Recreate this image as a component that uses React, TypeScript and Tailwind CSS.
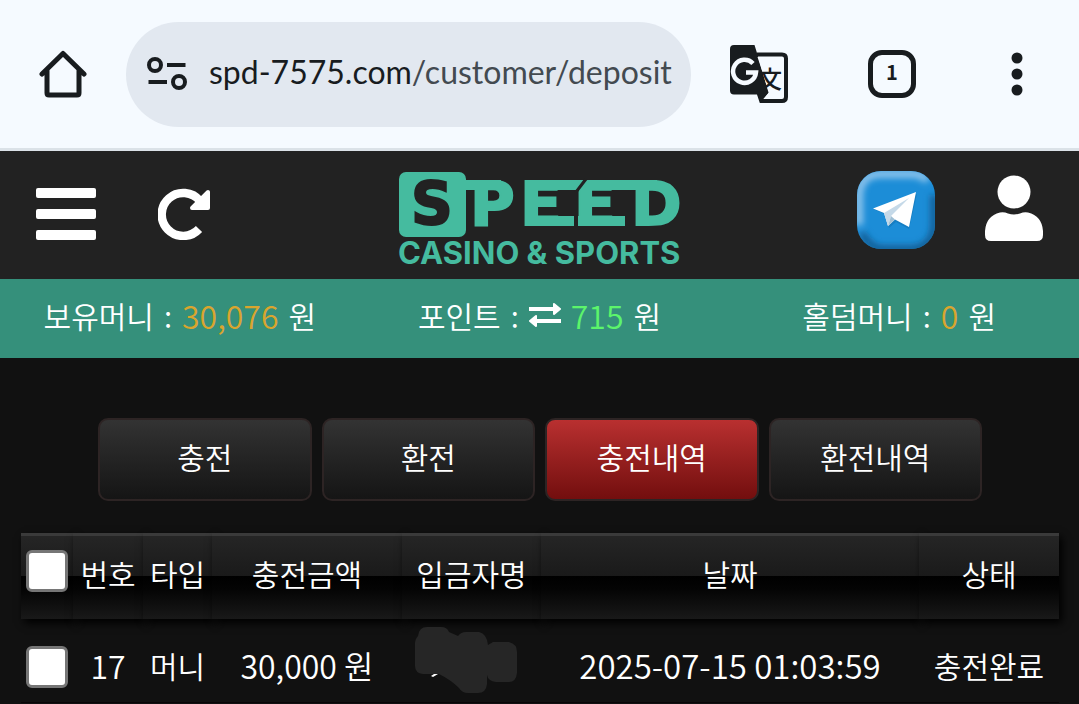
import React from "react";

const tabs = ["충전", "환전", "충전내역", "환전내역"];

const columns = [
  { label: "번호", width: "w-[70px]" },
  { label: "타입", width: "w-[69px]" },
  { label: "충전금액", width: "w-[190px]" },
  { label: "입금자명", width: "w-[139px]" },
  { label: "날짜", width: "" },
  { label: "상태", width: "w-[140px]" },
];

const deposits = [
  {
    id: 17,
    type: "머니",
    amount: "30,000 원",
    date: "2025-07-15 01:03:59",
    status: "충전완료",
  },
];

const thStyle =
  "h-[86px] bg-[linear-gradient(#262626,#1a1a1a_50%,#000_50%,#040404_65%,#191919)] p-0 text-center font-[350] shadow-[3px_4px_8px_#000]";

const HomeIcon = () => (
  <svg viewBox="0 0 48 48" className="h-12 w-12" fill="none" stroke="#181c1f">
    <path
      d="M3 24 24 3.500 45 24M8 20v23q0 2 2 2h28q2 0 2-2V20"
      strokeWidth="5"
      strokeLinejoin="round"
      strokeLinecap="round"
    />
  </svg>
);

const SiteInfoIcon = () => (
  <svg viewBox="0 0 40 34" className="h-[34px] w-10" fill="none" stroke="#181c1f">
    <circle cx="8" cy="8" r="6" strokeWidth="4" />
    <circle cx="32" cy="25" r="6" strokeWidth="4" />
    <path d="M20 8h18.500M1.500 25H20" strokeWidth="4" />
  </svg>
);

const TranslateIcon = () => (
  <svg viewBox="0 0 58 58" className="h-[58px] w-[58px]">
    <path
      d="M27 9.500h25q4 0 4 4v38.500q0 4-4 4H30"
      fill="none"
      stroke="#181c1f"
      strokeWidth="4"
    />
    <path
      d="M4 0h20.500l2.800 9 11.200 38.500L29.800 58 27 49.500H4q-4 0-4-4V4q0-4 4-4Z"
      fill="#181c1f"
    />
    <path d="M27.500 12h8l3 34-9-28Z" fill="#f5faff" />
    <path d="M38.500 47.500 30.500 57l-3-7.500Z" fill="#181c1f" />
    <path
      d="M23 18.500A11.500 11.500 0 1 0 26 27.500H16"
      fill="none"
      stroke="#f5faff"
      strokeWidth="4.500"
    />
    <text
      x="28"
      y="43"
      fontSize="24"
      className="fill-[#181c1f] font-['Noto_Sans_CJK_KR',sans-serif] font-medium">
      文
    </text>
  </svg>
);

const RefreshIcon = () => (
  <svg viewBox="0 0 52 52" className="h-13 w-13">
    <path
      d="M41 41A21.500 21.500 0 1 1 42 13"
      fill="none"
      stroke="#fff"
      strokeWidth="8.500"
    />
    <path
      d="M50 4v16H34Z"
      fill="#fff"
      stroke="#fff"
      strokeWidth="4"
      strokeLinejoin="round"
    />
  </svg>
);

const TelegramIcon = () => (
  <svg viewBox="0 0 78 78" className="h-[78px] w-[78px]">
    <defs>
      <clipPath id="tile">
        <rect width="78" height="78" rx="24" />
      </clipPath>
      <filter id="soft">
        <feGaussianBlur stdDeviation="3" />
      </filter>
    </defs>
    <g clipPath="url(#tile)">
      <rect width="78" height="78" fill="#1c8dd7" />
      <g fill="none" filter="url(#soft)">
        <path d="M2 54V24Q3 3 24 3h30q12 0 16 7" stroke="#8cc3eb" strokeWidth="8" />
        <path d="M5 62q8 16 22 16h28q21-2 22-24V24" stroke="#125c92" strokeWidth="7" />
      </g>
    </g>
    <path d="M17 38.500 60 23 52 58 39 51 32 57 28 43Z" fill="#0b5d96" opacity=".3" />
    <path d="M16 37.500 59 21 52 56 38 48.500 31 55 27 42Z" fill="#fff" />
    <path d="M27 42 52 27 34 45 31 55Z" fill="#c5d9e8" />
    <path d="M34 45 38 48.500 31 55Z" fill="#9fbfd4" />
  </svg>
);

const UserIcon = () => (
  <svg viewBox="0 0 58 66" className="h-[66px] w-[58px]" fill="#fff">
    <circle cx="29" cy="17" r="16.500" />
    <path d="M0 60V56Q1 41 15 37.500q4-.8 8 1 6 2 12 0 4-1.800 8-1Q57 41 58 56v4q0 6-6 6H6q-6 0-6-6Z" />
  </svg>
);

const SwapIcon = () => (
  <svg viewBox="0 0 32 26" className="h-[26px] w-8" fill="#fff" stroke="#fff">
    <path d="M0 7h25M32 19H7" strokeWidth="4" />
    <path
      d="M25 2v10l6-5ZM7 14v10l-6-5Z"
      strokeWidth="2"
      strokeLinejoin="round"
    />
  </svg>
);

const Logo = () => (
  <svg
    viewBox="0 0 284 94"
    className="h-[94px] w-[284px] overflow-visible font-['DejaVu_Sans',sans-serif] font-bold"
    aria-label="Speed Casino & Sports">
    <rect x="1" y="1" width="67" height="65" rx="7" fill="#45bb9f" />
    <text x="13" y="53" fontSize="58" stroke="#222" strokeWidth="2" className="fill-[#222]">
      S
    </text>
    <g fontSize="61" className="fill-[#45bb9f]" stroke="#45bb9f" strokeWidth="2">
      <text x="72" y="54">P</text>
      <text x="122" y="54">E</text>
      <text x="176" y="54">E</text>
      <text x="233" y="54">D</text>
    </g>
    {/* rails joining the letters */}
    <path
      d="M67 9h36v10H67ZM127 9h60l-8 10h-52ZM189 9h70v10h-78ZM127 45h49v10h-49ZM180 45h47v10h-47Z"
      fill="#45bb9f"
    />
    <path d="M188 8 178 21v35" fill="none" stroke="#222" strokeWidth="3" />
    <text
      x="0"
      y="93"
      fontSize="31"
      className="fill-[#45bb9f] font-['Inter',sans-serif] font-bold">
      CASINO &amp; SPORTS
    </text>
  </svg>
);

const BrowserBar = () => (
  <div className="flex h-[151px] items-center border-b-3 border-[#dbe2e8] bg-[#f5faff] pr-14 pl-[39px]">
    <button aria-label="Home">
      <HomeIcon />
    </button>
    <a
      href="#"
      className="mx-[39px] flex h-[105px] flex-1 items-center gap-[22px] rounded-full bg-[#e2e8f0] pl-[21px] font-['Lato',sans-serif] text-[32px] font-normal whitespace-nowrap text-[#434a50]">
      <SiteInfoIcon />
      <span className="pb-1">
        <span className="text-[#181c1f]">spd-7575.com</span>/customer/deposit
      </span>
    </a>
    <button aria-label="Translate">
      <TranslateIcon />
    </button>
    <button className="ml-20 flex h-12 w-12 items-center justify-center rounded-[14px] border-5 border-[#181c1f] pb-1 text-xl font-semibold text-[#181c1f]">
      1
    </button>
    <button aria-label="Menu" className="ml-[95px]">
      <svg viewBox="0 0 12 44" className="h-11 w-3" fill="#181c1f">
        <circle cx="6" cy="6" r="5.500" />
        <circle cx="6" cy="22" r="5.500" />
        <circle cx="6" cy="38" r="5.500" />
      </svg>
    </button>
  </div>
);

const Header = () => (
  <header className="grid h-32 grid-cols-[1fr_auto_1fr] items-start bg-[#222] px-9 pt-5">
    <div className="flex items-center gap-[62px] pt-4">
      <button aria-label="Open menu">
        <svg viewBox="0 0 60 54" className="h-[54px] w-15" fill="#fff">
          <rect width="60" height="10" y="1" rx="2" />
          <rect width="60" height="10" y="22" rx="2" />
          <rect width="60" height="10" y="43" rx="2" />
        </svg>
      </button>
      <button aria-label="Refresh">
        <RefreshIcon />
      </button>
    </div>
    <a href="#">
      <Logo />
    </a>
    <div className="flex items-start justify-end gap-[50px]">
      <a href="#" aria-label="Telegram">
        <TelegramIcon />
      </a>
      <button aria-label="My page" className="pt-1">
        <UserIcon />
      </button>
    </div>
  </header>
);

const Balances = () => (
  <div className="grid h-[79px] grid-cols-3 items-center bg-[#35907b] pb-2">
    <p className="flex items-center justify-center gap-2.5">
      <span>보유머니</span>
      <span>:</span>
      <span className="text-[32px] text-[#d9a52e]">30,076</span>
      <span>원</span>
    </p>
    <p className="flex items-center justify-center gap-2.5">
      <span>포인트</span>
      <span>:</span>
      <SwapIcon />
      <span className="text-[32px] text-[#5cf56b]">715</span>
      <span>원</span>
    </p>
    <p className="flex items-center justify-center gap-2.5">
      <span>홀덤머니</span>
      <span>:</span>
      <span className="text-[32px] text-[#d9a52e]">0</span>
      <span>원</span>
    </p>
  </div>
);

// Marker strokes that cover the depositor's name
const HiddenName = () => (
  <svg viewBox="0 0 102 68" className="mx-auto h-[68px] w-[102px]" fill="#262626">
    <path d="M3 10Q4 1 12 1h14q6 0 8 5l9 4q3-4 8-4h13q8 2 9 13l5-3h16q8 2 8 10v21q-1 9-8 9H81q-8-1-9-7v9q-1 9-9 9H53q-6 0-9-5-8-8-20-14H8q-8-1-8-8V18Q0 13 3 10Z" />
    <path d="M16 50l3-2h4l-5 3Z" fill="#fff" />
  </svg>
);

const CheckBox = ({ label }: { label: string }) => (
  <input
    type="checkbox"
    aria-label={label}
    className="block h-[42px] w-[42px] appearance-none rounded-md border-[3px] border-[#767676] bg-white checked:bg-[#35907b]"
  />
);

export default function App() {
  return (
    <div className="min-h-screen bg-[#111] font-['Noto_Sans_CJK_KR',sans-serif] text-[30px] leading-10 font-[350] text-white">
      <BrowserBar />
      <Header />
      <Balances />

      <main className="pt-15">
        <nav className="grid grid-cols-4 gap-[10px] pr-[97px] pl-[98px]">
          {tabs.map((tab) => (
            <button
              key={tab}
              className={`h-[83px] rounded-[10px] border-2 border-[#2d2424] bg-linear-to-b pb-2 ${
                tab === "충전내역"
                  ? "from-[#b93030] to-[#730e0e]"
                  : "from-[#333] to-[#151515]"
              }`}>
              {tab}
            </button>
          ))}
        </nav>

        <div className="pt-8 pr-5 pl-[21px]">
          <table className="w-full table-fixed border-collapse">
            <thead>
              <tr>
                <th className={`w-[52px] ${thStyle}`}>
                  <div className="flex h-full items-center border-t-3 border-[#3a3a3a] pb-3.5 pl-[5px]">
                    <CheckBox label="전체선택" />
                  </div>
                </th>
                {columns.map((column) => (
                  <th key={column.label} className={`${column.width} ${thStyle}`}>
                    <div className="flex h-full items-center justify-center border-t-3 border-[#3a3a3a] pb-2.5">
                      {column.label}
                    </div>
                  </th>
                ))}
              </tr>
            </thead>
            <tbody>
              {deposits.map((deposit) => (
                <tr key={deposit.id} className="h-[83px] border-b border-[#090507] text-center">
                  <td className="pt-3.5 pl-[5px]">
                    <CheckBox label="선택" />
                  </td>
                  <td className="pt-2.5 text-[32px]">{deposit.id}</td>
                  <td className="pt-2.5">{deposit.type}</td>
                  <td className="pt-2.5 text-[32px]">{deposit.amount}</td>
                  <td className="pr-3">
                    <HiddenName />
                  </td>
                  <td className="pt-2.5 text-[33px]">{deposit.date}</td>
                  <td className="pt-2.5">{deposit.status}</td>
                </tr>
              ))}
            </tbody>
          </table>
        </div>
      </main>
    </div>
  );
}
